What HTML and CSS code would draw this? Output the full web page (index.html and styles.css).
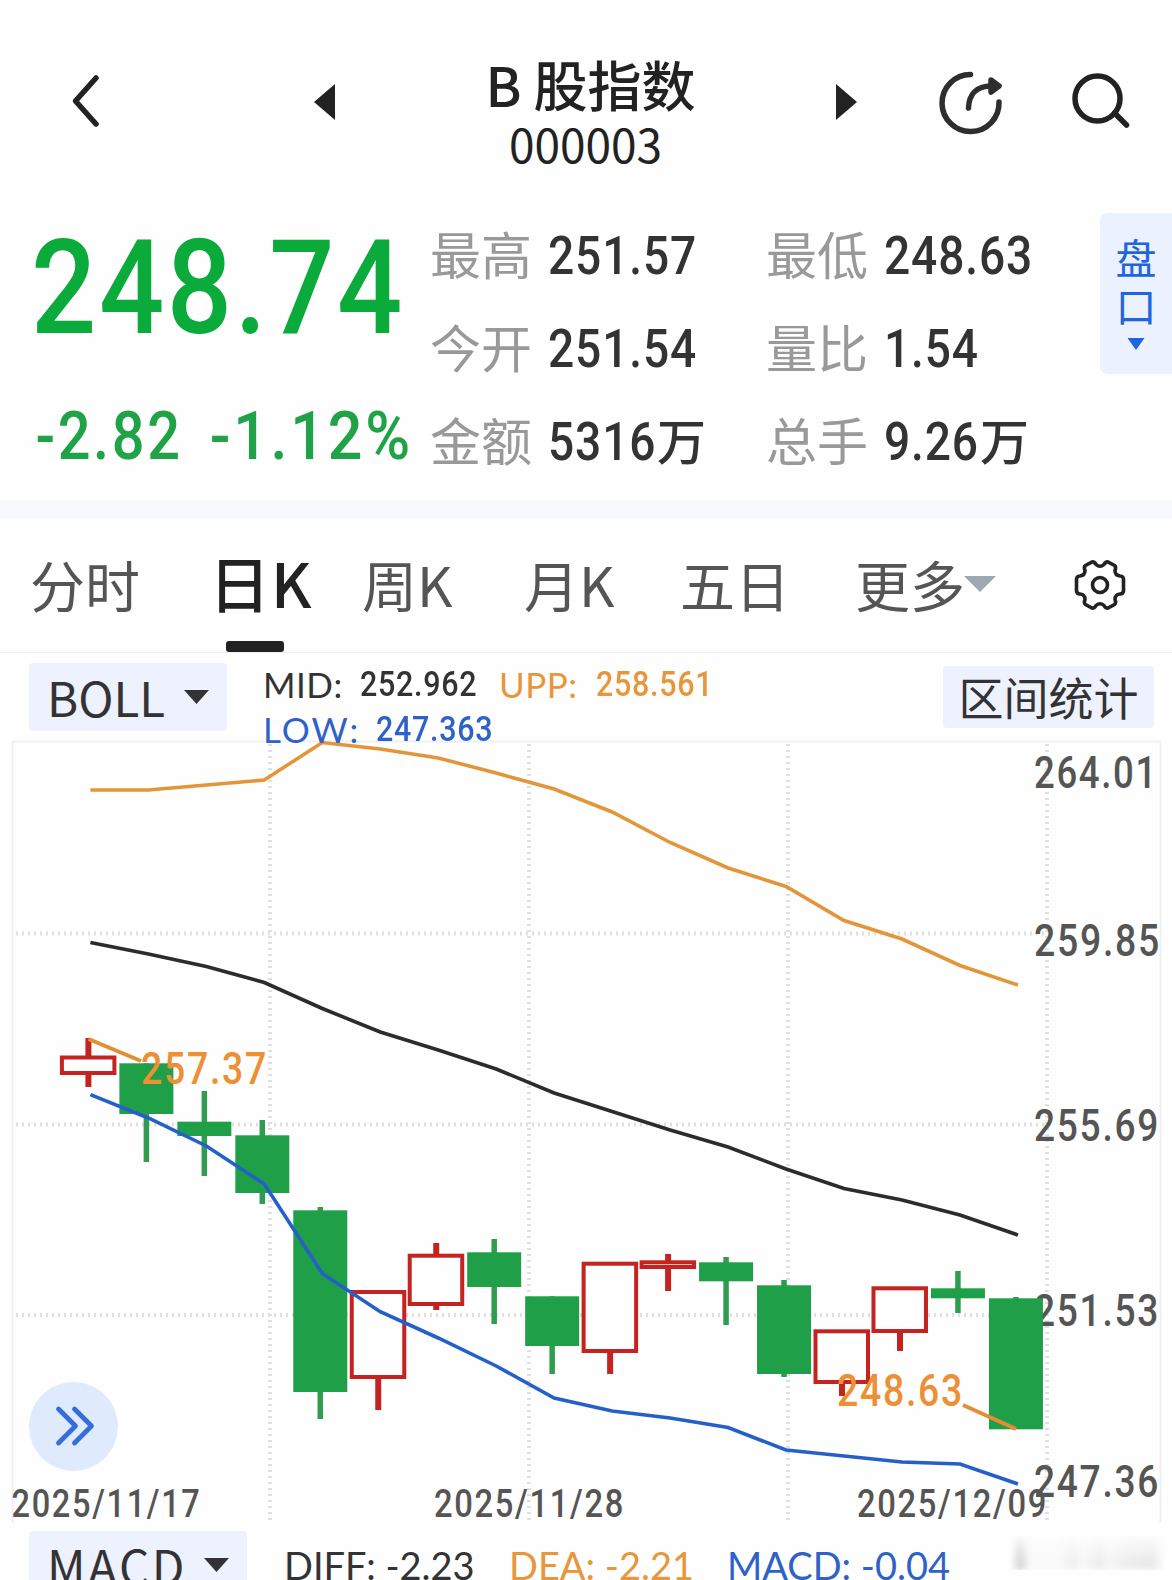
FILE: index.html
```html
<!DOCTYPE html>
<html lang="zh-CN">
<head>
  <meta charset="UTF-8" />
  <meta name="viewport" content="width=device-width, initial-scale=1" />
  <title>B股指数 000003</title>
  <link rel="stylesheet" href="styles.css">
</head>
<body>
  <div class="page">
    <header class="header">
      <svg class="icon-back" width="32" height="56" viewBox="0 0 32 56"><path d="M26 5 L5.500 28 L26 51" /></svg>
      <svg class="icon-prev" width="21" height="36" viewBox="0 0 21 36"><path d="M21 0 V36 L0 18 Z" /></svg>
      <div class="title">
        <h1>B 股指数</h1>
        <span class="code">000003</span>
      </div>
      <svg class="icon-next" width="21" height="36" viewBox="0 0 21 36"><path d="M0 0 V36 L21 18 Z" /></svg>
      <svg class="icon-share" width="66" height="66" viewBox="0 0 66 66">
        <path d="M33.500 4.500 A28.500 28.500 0 1 0 62 32" />
        <path d="M31.500 38 C32 24 40 16 54 16" />
        <path class="solid" d="M54 10 L62 16 L54 22 Z" />
      </svg>
      <svg class="icon-search" width="60" height="58" viewBox="0 0 60 58">
        <circle cx="26.500" cy="26.500" r="22.500" />
        <path d="M43.500 41 L55.500 53" />
      </svg>
    </header>

    <section class="quote">
      <div class="price-box">
        <div class="price"><span>248.74</span></div>
        <div class="change"><span>-2.82</span><span class="percent">-1.12%</span></div>
      </div>
      <dl class="stats">
        <div><dt>最高</dt><dd><span class="num">251.57</span></dd></div>
        <div><dt>最低</dt><dd><span class="num">248.63</span></dd></div>
        <div><dt>今开</dt><dd><span class="num">251.54</span></dd></div>
        <div><dt>量比</dt><dd><span class="num">1.54</span></dd></div>
        <div><dt>金额</dt><dd class="unit four"><span class="num">5316</span>万</dd></div>
        <div><dt>总手</dt><dd class="unit"><span class="num">9.26</span>万</dd></div>
      </dl>
      <div class="depth">
        <span>盘</span>
        <span>口</span>
        <i class="caret"></i>
      </div>
    </section>

    <nav class="tabs">
      <span class="tab">分时</span>
      <span class="tab active">日K</span>
      <span class="tab">周K</span>
      <span class="tab">月K</span>
      <span class="tab">五日</span>
      <span class="tab more">更多<i class="caret"></i></span>
      <svg class="icon-gear" width="54" height="52" viewBox="-27 -26 54 52">
        <path d="M-8 -23 Q-5.500 -23.500 -4 -20.500 Q0 -17 4 -20.500 Q5.500 -23.500 8 -23 L14.500 -19.500 Q16.500 -18 15 -14.500 Q15 -9.500 20 -9 Q23 -9 23.500 -6 V6 Q23 9 20 9 Q15 9.500 15 14.500 Q16.500 18 14.500 19.500 L8 23 Q5.500 23.500 4 20.500 Q0 17 -4 20.500 Q-5.500 23.500 -8 23 L-14.500 19.500 Q-16.500 18 -15 14.500 Q-15 9.500 -20 9 Q-23 9 -23.500 6 V-6 Q-23 -9 -20 -9 Q-15 -9.500 -15 -14.500 Q-16.500 -18 -14.500 -19.500 Z" />
        <circle r="7.500" />
      </svg>
    </nav>

    <div class="boll-bar">
      <div class="picker">BOLL<i class="caret"></i></div>
      <div class="values">
        <div class="line">
          <span class="mid"><b>MID:</b><span class="num">252.962</span></span>
          <span class="upp"><b>UPP:</b><span class="num">258.561</span></span>
        </div>
        <div class="line"><span class="low"><b>LOW:</b><span class="num">247.363</span></span></div>
      </div>
      <div class="range">区间统计</div>
    </div>

    <div class="chart">
      <svg width="1172" height="790" viewBox="0 740 1172 790">
        <path class="frame" d="M12.500 1523 V741.500 H1160.500 V1523" />
        <g class="grid">
          <path d="M16 933.500 H1047 M16 1124.500 H1047 M16 1315 H1047" />
          <path d="M270 744 V1524 M529 744 V1524 M788 744 V1524 M1047 744 V1524" />
        </g>
        <g class="axis">
          <text x="1034" y="787.500" textLength="124" lengthAdjust="spacingAndGlyphs">264.01</text>
          <text x="1034" y="955.500" textLength="127" lengthAdjust="spacingAndGlyphs">259.85</text>
          <text x="1034" y="1141" textLength="126" lengthAdjust="spacingAndGlyphs">255.69</text>
          <text x="1034" y="1326" textLength="126" lengthAdjust="spacingAndGlyphs">251.53</text>
          <text x="1034" y="1497" textLength="126" lengthAdjust="spacingAndGlyphs">247.36</text>
        </g>
        <g class="dates">
          <text x="11.500" y="1517" textLength="190" lengthAdjust="spacingAndGlyphs">2025/11/17</text>
          <text x="434" y="1517" textLength="191" lengthAdjust="spacingAndGlyphs">2025/11/28</text>
          <text x="857" y="1517" textLength="191" lengthAdjust="spacingAndGlyphs">2025/12/09</text>
        </g>
        <g id="candles"></g>
        <polyline class="upp-line" id="upp" />
        <polyline class="mid-line" id="mid" />
        <polyline class="low-line" id="low" />
        <g class="marks">
          <path d="M88.500 1039 L141 1061 M963 1405 L1016 1429" />
          <text x="141" y="1084" textLength="127" lengthAdjust="spacingAndGlyphs">257.37</text>
          <text x="837" y="1405.500" textLength="127" lengthAdjust="spacingAndGlyphs">248.63</text>
        </g>
      </svg>
      <div class="expand">
        <svg width="44" height="44" viewBox="0 0 44 44"><path d="M6.500 5 L23.500 22 L6.500 39 M22.500 5 L39.500 22 L22.500 39" /></svg>
      </div>
    </div>

    <div class="macd-bar">
      <div class="picker">MACD<i class="caret"></i></div>
      <span class="diff">DIFF: -2.23</span>
      <span class="dea">DEA: -2.21</span>
      <span class="macd">MACD: -0.04</span>
      <div class="smudge"></div>
    </div>
  </div>

  <script>
    const x0 = 88.4;
    const step = 57.97;

    // [up, high, body top, body bottom, low]
    const candles = [
      [1, 1038, 1055.5, 1075, 1087],
      [0, 1063.3, 1063.3, 1114, 1162],
      [0, 1091, 1121.7, 1136, 1176],
      [0, 1120, 1135.3, 1193, 1204],
      [0, 1207, 1210.3, 1392, 1419],
      [1, 1290, 1290, 1379, 1410],
      [1, 1243, 1253.7, 1306, 1310],
      [0, 1239, 1252.3, 1287, 1324],
      [0, 1296.3, 1296.3, 1346, 1374],
      [1, 1262, 1261.7, 1353, 1374],
      [1, 1254, 1260.3, 1269, 1291],
      [0, 1257, 1262.3, 1281.3, 1325],
      [0, 1280, 1285.3, 1374, 1377],
      [1, 1329.3, 1329.3, 1384, 1396],
      [1, 1286.3, 1286.3, 1333, 1351],
      [0, 1271, 1288.3, 1298.3, 1313],
      [0, 1297, 1298.3, 1429.3, 1429]
    ];

    let html = "";
    candles.forEach(([up, high, top, bottom, low], i) => {
      const x = x0 + step * i;
      if (up) {
        if (high < top) {
          html += `<path class="up-wick" d="M${x} ${high} V${top + 2}" />`;
        }
        html += `<path class="up-wick" d="M${x} ${bottom - 2} V${low}" />`;
        html += `<rect class="up" x="${x - 26.5}" y="${top + 2}" width="52.5" height="${bottom - top - 4}" />`;
      } else {
        html += `<path class="down-wick" d="M${x} ${high} V${low}" />`;
        html += `<rect class="down" x="${x - 27}" y="${top}" width="54" height="${bottom - top}" />`;
      }
    });
    document.getElementById("candles").innerHTML = html;

    const lines = {
      upp: [790, 790, 785, 780, 742.5, 749, 758, 773, 789, 812, 842.5, 868, 886.5, 920.5, 939, 965.5, 985],
      mid: [942.5, 954, 966.5, 982.5, 1008.5, 1032, 1050, 1069, 1093, 1111.5, 1130, 1147, 1169, 1188.5, 1200, 1215, 1235],
      low: [1094.7, 1118, 1146, 1184, 1273.5, 1311.7, 1338, 1366, 1398, 1411, 1418, 1427.5, 1450, 1456, 1462, 1464, 1484]
    };
    for (const id in lines) {
      const points = lines[id].map((y, i) => `${x0 + 2 + step * i},${y}`).join(" ");
      document.getElementById(id).setAttribute("points", points);
    }
  </script>
</body>
</html>
```
FILE: styles.css
```css
* {
  box-sizing: border-box;
}
body {
  margin: 0;
  background: #fefefe;
  color: #222;
  font-family: Lato, "Noto Sans CJK SC", sans-serif;
}
.page {
  width: 1172px;
  height: 1580px;
  overflow: hidden;
}
svg {
  display: block;
  flex: none;
}
h1, dl, dd {
  margin: 0;
}
.num {
  display: inline-block;
  font-family: Roboto, sans-serif;
  transform: scaleX(0.87);
  transform-origin: left center;
  white-space: nowrap;
}
.caret {
  display: block;
  flex: none;
  background: currentColor;
  clip-path: polygon(0 0, 100% 0, 50% 100%);
}

/* header */
.header {
  display: flex;
  height: 213px;
  padding: 0 41px 0 70px;
  align-items: flex-start;
}
.header svg {
  fill: none;
  stroke: #222;
  stroke-width: 5.5;
  stroke-linecap: round;
  stroke-linejoin: round;
}
.header .icon-back {
  margin-top: 73px;
}
.header .icon-prev, .header .icon-next {
  margin-top: 84px;
  fill: #222;
  stroke: none;
}
.header .icon-prev {
  margin-left: 212px;
}
.title {
  width: 501px;
  padding-top: 45px;
  text-align: center;
  font-family: "Noto Sans CJK SC", sans-serif;
}
.title h1 {
  padding-left: 10px;
  font-size: 54px;
  font-weight: 500;
  line-height: 77px;
  white-space: nowrap;
}
.code {
  display: block;
  font-size: 46px;
  line-height: 43px;
}
.header .icon-share {
  margin: 70px 0 0 80px;
}
.header .icon-share path {
  stroke: #2e2e2e;
}
.header .icon-share .solid {
  fill: #2e2e2e;
}
.header .icon-search {
  margin: 72px 0 0 auto;
}

/* quote */
.quote {
  display: flex;
  height: 306px;
  border-bottom: 19px solid #f7f9fd;
}
.price-box {
  width: 430px;
  padding-left: 31px;
  font-family: Roboto, sans-serif;
  white-space: nowrap;
}
.price {
  height: 146px;
  color: #0aab3a;
  font-size: 132px;
  font-weight: 500;
  line-height: 151px;
  letter-spacing: 3px;
}
.price span {
  display: inline-block;
  transform: scaleX(0.87);
  transform-origin: left center;
}
.change {
  display: flex;
  color: #20a346;
  font-size: 66px;
  line-height: 156px;
  font-weight: 500;
  letter-spacing: 3px;
}
.change span {
  flex: none;
  width: 174px;
  padding-left: 5px;
  transform: scaleX(0.875);
  transform-origin: left center;
}
.change .percent {
  transform: scaleX(0.925);
}
.stats {
  display: grid;
  grid-template-columns: 336px 334px;
  grid-auto-rows: 93px;
  width: 670px;
}
.stats > div {
  display: flex;
  height: 84px;
  line-height: 84px;
}
.stats dt {
  width: 118px;
  color: #999;
  font-family: "Noto Sans CJK SC", sans-serif;
  font-size: 51px;
  line-height: 81px;
}
.stats dd {
  display: flex;
  color: #333;
  font-size: 49px;
  font-family: "Noto Sans CJK SC", sans-serif;
  font-weight: 500;
  line-height: 80px;
}
.stats .num {
  font-size: 53px;
  letter-spacing: 1px;
  line-height: 86px;
  transform: scaleX(0.87);
}
.stats .unit .num {
  width: 96px;
}
.stats .four .num {
  width: 109px;
}
.depth {
  display: flex;
  flex-direction: column;
  align-items: center;
  width: 72px;
  height: 161px;
  padding-top: 19px;
  border-radius: 8px 0 0 8px;
  background: #ebf1fe;
  color: #2065e0;
  font-family: "Noto Sans CJK SC", sans-serif;
  font-size: 41px;
  line-height: 48px;
}
.depth .caret {
  width: 17px;
  height: 12px;
  margin-top: 10px;
}

/* tabs */
.tabs {
  display: grid;
  grid-template-columns: 185px 147px 162px 156px 175px 217px auto;
  height: 134px;
  padding-left: 30px;
  border-bottom: 1px solid #eee;
  font-family: "Noto Sans CJK SC", sans-serif;
  font-size: 55px;
  line-height: 128px;
}
.tab {
  color: #555;
  white-space: nowrap;
}
.tab.active {
  position: relative;
  color: #222;
  font-size: 61px;
  font-weight: 500;
  line-height: 125px;
  text-indent: -6px;
  letter-spacing: 1px;
}
.tab.active::after {
  content: "";
  position: absolute;
  left: 11px;
  bottom: 0;
  width: 58px;
  height: 11px;
  border-radius: 3px;
  background: #222;
}
.tab.more {
  display: flex;
}
.tab.more .caret {
  width: 32px;
  height: 16px;
  margin: 57px 0 0 -1px;
  color: #9ea8b2;
}
.icon-gear {
  margin: 40px 0 0 1px;
  fill: none;
  stroke: #222;
  stroke-width: 3.6;
}

/* indicator bars */
.boll-bar {
  display: flex;
  height: 87px;
  padding: 10px 18px 0 29px;
  position: relative;
  z-index: 1;
}
.picker {
  display: flex;
  align-items: center;
  justify-content: space-between;
  width: 198px;
  height: 68px;
  padding: 0 18px 0 18px;
  border-radius: 4px;
  background: #eef1fe;
  color: #333;
  font-family: "Noto Sans CJK SC", sans-serif;
  font-size: 47.5px;
  line-height: 62px;
}
.picker .caret {
  width: 25px;
  height: 14px;
}
.values {
  padding-left: 36px;
  font-size: 35px;
  color: #333;
}
.line {
  display: flex;
  height: 45px;
  line-height: 44px;
}
.line > span {
  display: flex;
  width: 236px;
}
.line b {
  flex: none;
  width: 97px;
  font-weight: 400;
  letter-spacing: 0.5px;
  line-height: 42px;
}
.line .low b {
  width: 113px;
  letter-spacing: 2px;
}
.line .num {
  font-weight: 500;
  letter-spacing: 0.8px;
}
.upp, .dea {
  color: #e8963c;
}
.low, .macd {
  color: #2f62c9;
}
.range {
  width: 211px;
  height: 62px;
  margin: 3px 0 0 auto;
  border-radius: 4px;
  background: #eef1fe;
  color: #333;
  font-family: "Noto Sans CJK SC", sans-serif;
  font-size: 45px;
  line-height: 62px;
  text-align: center;
}

/* chart */
.chart {
  position: relative;
  height: 791px;
}
.frame {
  fill: none;
  stroke: #f0f0f0;
  stroke-width: 2;
}
.grid path {
  stroke: #e0e0e0;
  stroke-width: 4;
  stroke-dasharray: 2 4;
}
.chart text {
  font-family: Roboto, sans-serif;
  letter-spacing: 2px;
}
.axis text {
  fill: #555;
  font-size: 43.5px;
  font-weight: 500;
}
.dates text {
  fill: #555;
  font-size: 39.5px;
  font-weight: 500;
}
.up {
  fill: #fefefe;
  stroke: #c4231f;
  stroke-width: 4;
}
.up-wick {
  stroke: #c4231f;
  stroke-width: 6;
}
.down {
  fill: #1fa048;
}
.down-wick {
  stroke: #2f9c50;
  stroke-width: 5.5;
}
.chart polyline {
  fill: none;
  stroke-width: 3.6;
}
.chart .upp-line {
  stroke: #e3953a;
}
.chart .mid-line {
  stroke: #2c2c2c;
}
.chart .low-line {
  stroke: #2560c8;
}
.marks path {
  stroke: #e58d35;
  stroke-width: 4;
}
.marks text {
  fill: #ed8f34;
  font-size: 43.5px;
  font-weight: 500;
}
.expand {
  position: absolute;
  left: 29px;
  top: 642px;
  width: 89px;
  height: 89px;
  padding: 22px 0 0 23px;
  border-radius: 50%;
  background: #e0eafd;
}
.expand path {
  fill: none;
  stroke: #366ddd;
  stroke-width: 4.8;
  stroke-linecap: round;
  stroke-linejoin: round;
}
.macd-bar {
  display: flex;
  height: 68px;
  padding-left: 29px;
  color: #333;
  font-size: 38px;
  line-height: 68px;
  white-space: nowrap;
}
.macd-bar .picker {
  width: 218px;
  line-height: 60px;
  letter-spacing: 2.5px;
}
.diff {
  width: 262px;
  padding-left: 37px;
}
.macd-bar .dea {
  width: 218px;
}
.macd-bar .macd {
  width: 280px;
}
.smudge {
  width: 158px;
  height: 36px;
  margin-top: 3px;
  background: linear-gradient(90deg, #fefefe 2%, #d8d8d8 8%, #fafafa 15%, #fafafa 32%, #f0f0f0 42%, #f9f9f9 48%, #eee 58%, #f6f6f6 66%, #f0f0f0 72%, #eaeaea 92%, #fefefe);
  -webkit-mask-image: linear-gradient(transparent, #000 70%);
  mask-image: linear-gradient(transparent, #000 70%);
  filter: blur(2px);
}
```
